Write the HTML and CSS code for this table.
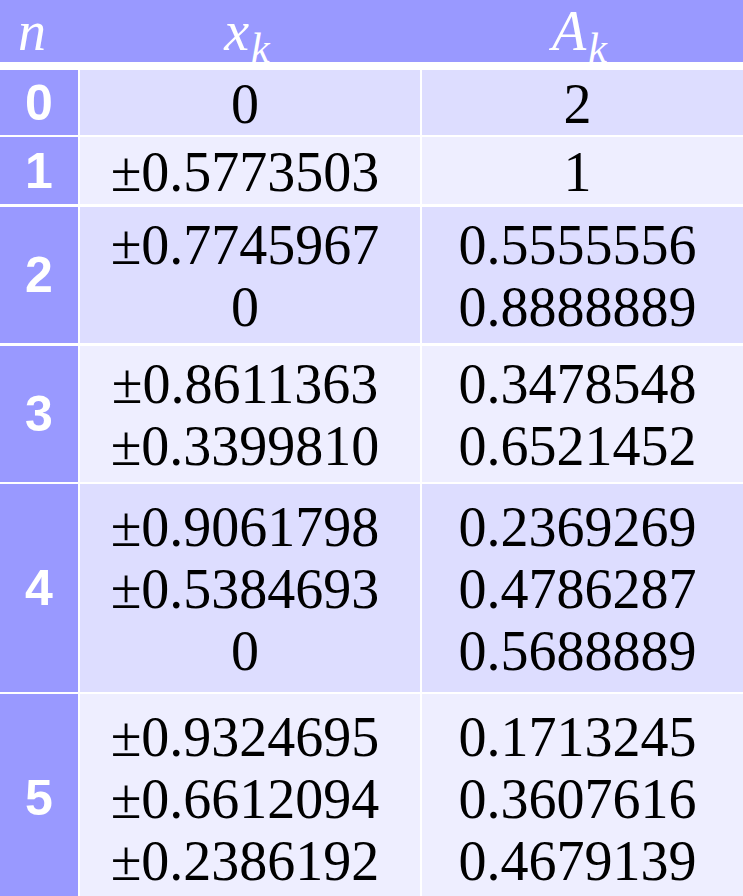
FILE: index.html
```html
<!DOCTYPE html>
<html>
<head>
<meta charset="utf-8">
<link rel="stylesheet" href="styles.css">
</head>
<body>
<div class="table">
  <div class="row head">
    <div class="hcell hn"><span class="mi">n</span></div>
    <div class="hcell"><span class="mi">x</span><sub class="sb">k</sub></div>
    <div class="hcell"><span class="mi">A</span><sub class="sb">k</sub></div>
  </div>
  <div class="row dark h1">
    <div class="cell n">0</div>
    <div class="cell v"><div>0</div></div>
    <div class="cell v"><div>2</div></div>
  </div>
  <div class="row light h1b">
    <div class="cell n">1</div>
    <div class="cell v"><div>±0.5773503</div></div>
    <div class="cell v"><div>1</div></div>
  </div>
  <div class="row dark h2">
    <div class="cell n">2</div>
    <div class="cell v"><div>±0.7745967</div><div>0</div></div>
    <div class="cell v"><div>0.5555556</div><div>0.8888889</div></div>
  </div>
  <div class="row light h2b">
    <div class="cell n">3</div>
    <div class="cell v"><div>±0.8611363</div><div>±0.3399810</div></div>
    <div class="cell v"><div>0.3478548</div><div>0.6521452</div></div>
  </div>
  <div class="row dark h3">
    <div class="cell n">4</div>
    <div class="cell v"><div>±0.9061798</div><div>±0.5384693</div><div>0</div></div>
    <div class="cell v"><div>0.2369269</div><div>0.4786287</div><div>0.5688889</div></div>
  </div>
  <div class="row light h3">
    <div class="cell n">5</div>
    <div class="cell v"><div>±0.9324695</div><div>±0.6612094</div><div>±0.2386192</div></div>
    <div class="cell v"><div>0.1713245</div><div>0.3607616</div><div>0.4679139</div></div>
  </div>
</div>
</body>
</html>
```
FILE: styles.css
```css
html, body {
  margin: 0;
  padding: 0;
  background: #ffffff;
}
.table {
  width: 743px;
  height: 896px;
  overflow: hidden;
  display: flex;
  flex-direction: column;
  gap: 2px;
}
.row {
  display: grid;
  grid-template-columns: 78px 340px 321px;
  column-gap: 2px;
  flex: none;
}
.cell {
  display: flex;
  flex-direction: column;
  justify-content: center;
  align-items: center;
  font-family: "Liberation Serif", "Times New Roman", serif;
  font-size: 56px;
  line-height: 62px;
  color: #000;
}
.cell.v {
  padding-right: 10px;
  padding-top: 2px;
}
.head {
  height: 62px;
  margin-bottom: 6px;
  background: #9999ff;
}
.hcell {
  text-align: center;
  color: #fff;
  font-family: "Liberation Serif", "Times New Roman", serif;
  font-size: 56px;
  line-height: 62px;
  background: #9999ff;
  padding-right: 6px;
}
.hcell.hn {
  padding-right: 14px;
}
.mi {
  font-style: italic;
}
.sb {
  font-style: italic;
  font-size: 42px;
  line-height: 0;
  vertical-align: -12px;
  margin-left: 2px;
}
.n {
  background: #9999ff;
  color: #fff;
  font-family: "Liberation Sans", Arial, sans-serif;
  font-weight: bold;
  font-size: 50px;
}
.dark .v { background: #ddddff; }
.light .v { background: #eeeeff; }
.h1 { height: 65px; }
.h1b { height: 67px; margin-bottom: 1px; }
.h2 { height: 136px; margin-bottom: 1px; }
.h2b { height: 136px; }
.h3 { height: 208px; }
```
